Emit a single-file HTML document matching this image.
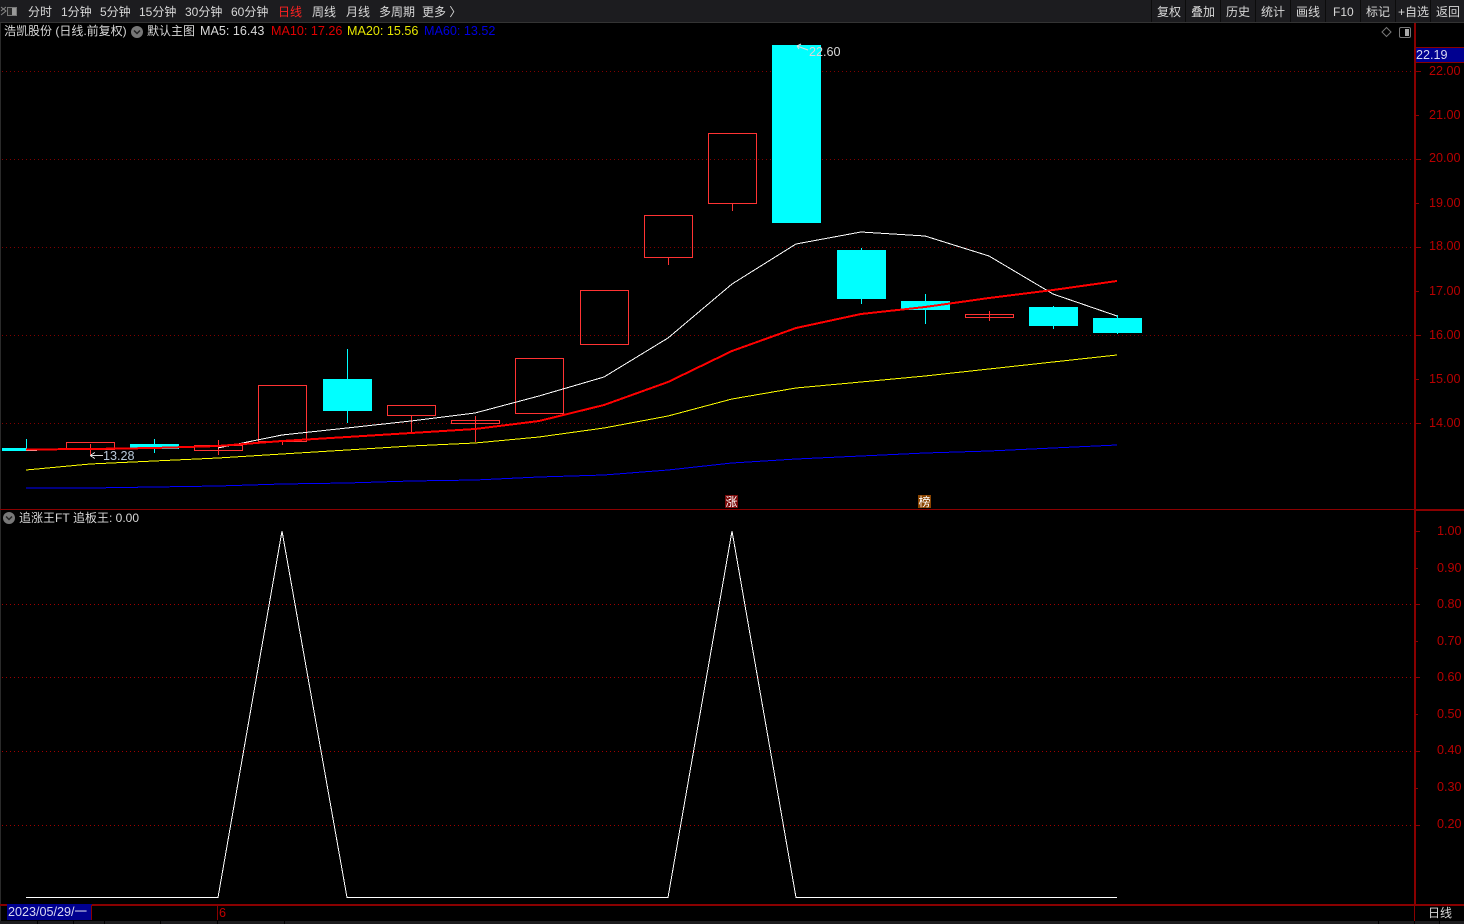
<!DOCTYPE html>
<html><head><meta charset="utf-8">
<style>
html,body{margin:0;padding:0;background:#000;width:1464px;height:924px;overflow:hidden}
body{position:relative;font-family:"Liberation Sans","Noto Sans CJK SC",sans-serif;font-size:12.6px;color:#d8d8d8}
.t{position:absolute;white-space:nowrap;line-height:16px;height:16px}
.c{font-size:12px}
.top{position:absolute;left:0;top:0;width:1464px;height:22px;background:#1c1c1f;border-bottom:1px solid #333}
.sep{position:absolute;top:0;width:1px;height:22px;background:#0c0c0c}
.ax{position:absolute;left:1429px;color:#b80000;line-height:14px;white-space:nowrap;font-size:12.6px}
svg{position:absolute;left:0;top:0}
</style></head><body>
<svg width="1464" height="924" viewBox="0 0 1464 924">
<g stroke="#800000" stroke-width="1" stroke-dasharray="1 3" shape-rendering="crispEdges">
<path d="M2 71.5H1412M2 159.5H1412M2 247.5H1412M2 335.5H1412M2 423.5H1412"/>
</g>
<g stroke="#a00000" stroke-width="1" stroke-dasharray="1 3" shape-rendering="crispEdges">
<path d="M2 604.5H1412M2 677.5H1412M2 751.5H1412M2 825.5H1412"/>
</g>
<!-- wicks & candles -->
<g shape-rendering="crispEdges">
<g stroke="#0ff" fill="none">
<path d="M26.5 439V450M154.5 439V453M347.5 349V379M347.5 411V423M861.5 248V304M925.5 294V324M1053.5 306V329M1117.5 315V334"/>
</g>
<g fill="#0ff">
<rect x="2" y="448" width="24" height="3"/>
<rect x="130" y="444" width="49" height="5"/>
<rect x="323" y="379" width="49" height="32"/>
<rect x="772" y="45" width="49" height="178"/>
<rect x="837" y="250" width="49" height="49"/>
<rect x="901" y="301" width="49" height="9"/>
<rect x="1029" y="307" width="49" height="19"/>
<rect x="1093" y="318" width="49" height="15"/>
</g>
<g stroke="#f33" fill="none">
<path d="M90.5 444V455M218.5 440V455M411.5 415V432M475.5 416V442M668.5 257V265M732.5 203V211M989.5 311V321M282.5 441V445"/>
<rect x="66.5" y="442.5" width="48" height="7"/>
<rect x="194.5" y="445.5" width="48" height="5"/>
<rect x="258.5" y="385.5" width="48" height="56"/>
<rect x="387.5" y="405.5" width="48" height="10"/>
<rect x="451.5" y="420.5" width="48" height="3"/>
<rect x="515.5" y="358.5" width="48" height="55"/>
<rect x="580.5" y="290.5" width="48" height="54"/>
<rect x="644.5" y="215.5" width="48" height="42"/>
<rect x="708.5" y="133.5" width="48" height="70"/>
<rect x="965.5" y="314.5" width="48" height="3"/>
</g>
</g>
<!-- MAs -->
<g fill="none" shape-rendering="crispEdges">
<polyline stroke="#00f" stroke-width="1" points="26,488 90,488 154,487 218,486 282,484 347,483 411,481 475,480 539,477 604,475 668,470 732,463 796,459 861,456 925,453 989,451 1053,448 1117,445"/>
<polyline stroke="#ff0" stroke-width="1" points="26,470 90,464 154,461 218,458 282,454 347,450 411,446 475,443 539,437 604,428 668,416 732,399 796,388 861,382 925,376 989,369 1053,362 1117,355"/>
<polyline stroke="#fff" stroke-width="1" points="26,450.5 37,450.5"/>
<polyline stroke="#fff" stroke-width="1" points="218,448 282,435 347,428 411,421 475,413 539,396 604,377 668,338 732,284 796,244 861,232 925,236 989,256 1053,294 1117,316"/>
<polyline stroke="#f00" stroke-width="2" points="26,449.5 90,449 154,448 218,446 282,441 347,437 411,433 475,429 539,421 604,405 668,382 732,351 796,328 861,314 925,307 989,298 1053,290 1117,281"/>
<polyline stroke="#fff" stroke-width="1" points="26,897.5 218,897.5 282,531 347,897.5 668,897.5 732,531 796,897.5 1117,897.5"/>
</g>
<!-- arrows -->
<g stroke="#ddd" fill="none" stroke-width="1">
<path d="M90 455.5H103M90 455.5L95 452.5M90 455.5L95 458.5" shape-rendering="crispEdges"/>
<path d="M797 46L808 50M797 46L801 44M797 46L799 49"/>
</g>
<!-- frame -->
<g shape-rendering="crispEdges">
<rect x="0" y="23" width="1" height="898" fill="#2a2a2a"/>
<rect x="0" y="509" width="1464" height="1" fill="#8a0000"/>
<rect x="1414" y="23" width="2" height="882" fill="#8a0000"/>
<rect x="1414" y="906" width="1" height="15" fill="#8a0000"/>
<rect x="1415" y="509" width="49" height="2" fill="#8a0000"/>
<rect x="0" y="904" width="1464" height="2" fill="#8a0000"/>
<rect x="217" y="906" width="1" height="14" fill="#8a0000"/>
<g stroke="#8a0000"><path d="M1416 71.5H1421M1416 115.5H1419M1416 159.5H1421M1416 203.5H1419M1416 247.5H1421M1416 291.5H1419M1416 335.5H1421M1416 379.5H1419M1416 423.5H1421M1416 531.5H1420M1416 568.5H1418M1416 604.5H1420M1416 641.5H1418M1416 677.5H1420M1416 714.5H1418M1416 751.5H1420M1416 788.5H1418M1416 825.5H1420"/></g>
<rect x="1416" y="47" width="48" height="16" fill="#000090"/>
<path d="M1416 47.5H1464M1416 62.5H1464" stroke="#8a0000"/>
<rect x="7" y="904" width="85" height="16" fill="#000090"/>
<rect x="91" y="905" width="1" height="15" fill="#8a0000"/>
<!-- bottom strip -->
<rect x="0" y="921" width="1464" height="3" fill="#1c1c1e"/>
<g fill="#000"><rect x="37" y="921" width="1" height="3"/><rect x="73" y="921" width="1" height="3"/><rect x="104" y="921" width="1" height="3"/><rect x="160" y="921" width="1" height="3"/><rect x="217" y="921" width="1" height="3"/><rect x="284" y="921" width="1" height="3"/><rect x="1378" y="921" width="1" height="3"/><rect x="1414" y="921" width="1" height="3"/><rect x="1439" y="921" width="1" height="3"/></g>
<!-- signals -->
<rect x="725" y="495" width="13" height="13" fill="#7a0a0a"/>
<rect x="918" y="495" width="13" height="13" fill="#8a4400"/>
</g>
<!-- icons top right -->
<path d="M1386.5 27.5L1391 32L1386.5 36.5L1382 32Z" fill="none" stroke="#777"/>
<rect x="1399.5" y="27.5" width="11" height="10" rx="1.5" fill="none" stroke="#777"/>
<rect x="1405" y="29" width="4" height="7" fill="#aaa"/>
<circle cx="137" cy="32" r="6" fill="#777"/><path d="M134 30.5L137 33.5L140 30.5" fill="none" stroke="#222" stroke-width="1.5"/>
<circle cx="9" cy="518" r="6" fill="#777"/><path d="M6 516.5L9 519.5L12 516.5" fill="none" stroke="#222" stroke-width="1.5"/>
</svg>

<div class="top"></div>
<svg width="24" height="22" viewBox="0 0 24 22"><path d="M1 7L6 11L1 15M6 7L1 11" fill="none" stroke="#888" stroke-width="1"/><rect x="7.5" y="7.5" width="9" height="8" fill="#2a2a2a" stroke="#777"/><rect x="12" y="8" width="4" height="7" fill="#999"/></svg>
<div class="t c" style="left:28px;top:4px">分时</div>
<div class="t c" style="left:61px;top:4px">1分钟</div>
<div class="t c" style="left:100px;top:4px">5分钟</div>
<div class="t c" style="left:139px;top:4px">15分钟</div>
<div class="t c" style="left:185px;top:4px">30分钟</div>
<div class="t c" style="left:231px;top:4px">60分钟</div>
<div class="t c" style="left:278px;top:4px;color:#f22">日线</div>
<div class="t c" style="left:312px;top:4px">周线</div>
<div class="t c" style="left:346px;top:4px">月线</div>
<div class="t c" style="left:379px;top:4px">多周期</div>
<div class="t c" style="left:422px;top:4px">更多 〉</div>

<div class="sep" style="left:1151px"></div><div class="sep" style="left:1185px"></div><div class="sep" style="left:1220px"></div><div class="sep" style="left:1255px"></div><div class="sep" style="left:1290px"></div><div class="sep" style="left:1325px"></div><div class="sep" style="left:1360px"></div><div class="sep" style="left:1395px"></div><div class="sep" style="left:1430px"></div>
<div class="t c" style="left:1157px;top:4px">复权</div>
<div class="t c" style="left:1191px;top:4px">叠加</div>
<div class="t c" style="left:1226px;top:4px">历史</div>
<div class="t c" style="left:1261px;top:4px">统计</div>
<div class="t c" style="left:1296px;top:4px">画线</div>
<div class="t c" style="left:1333px;top:4px">F10</div>
<div class="t c" style="left:1366px;top:4px">标记</div>
<div class="t c" style="left:1398px;top:4px">+自选</div>
<div class="t c" style="left:1436px;top:4px">返回</div>

<div class="t c" style="left:4px;top:23px">浩凯股份 (日线.前复权)</div>
<div class="t c" style="left:147px;top:23px">默认主图</div>
<div class="t" style="left:200px;top:23px">MA5: 16.43</div>
<div class="t" style="left:271px;top:23px;color:#e00000">MA10: 17.26</div>
<div class="t" style="left:347px;top:23px;color:#e6e600">MA20: 15.56</div>
<div class="t" style="left:424px;top:23px;color:#0000e0">MA60: 13.52</div>

<div class="t c" style="left:19px;top:510px">追涨王FT</div>
<div class="t c" style="left:73px;top:510px">追板王: 0.00</div>

<div class="t" style="left:103px;top:448px;color:#b8c8d8">13.28</div>
<div class="t" style="left:809px;top:44px;color:#d8d8d8">22.60</div>
<div class="t" style="left:1416px;top:47px;color:#d8d8f0">22.19</div>

<div class="ax" style="top:64px">22.00</div><div class="ax" style="top:108px">21.00</div><div class="ax" style="top:151px">20.00</div><div class="ax" style="top:196px">19.00</div><div class="ax" style="top:239px">18.00</div><div class="ax" style="top:284px">17.00</div><div class="ax" style="top:328px">16.00</div><div class="ax" style="top:372px">15.00</div><div class="ax" style="top:416px">14.00</div>
<div class="ax" style="top:524px;left:1437px">1.00</div><div class="ax" style="top:561px;left:1437px">0.90</div><div class="ax" style="top:597px;left:1437px">0.80</div><div class="ax" style="top:634px;left:1437px">0.70</div><div class="ax" style="top:670px;left:1437px">0.60</div><div class="ax" style="top:707px;left:1437px">0.50</div><div class="ax" style="top:743px;left:1437px">0.40</div><div class="ax" style="top:780px;left:1437px">0.30</div><div class="ax" style="top:817px;left:1437px">0.20</div>

<div class="t" style="left:8px;top:904px;color:#d8d8f0">2023/05/29/一</div>
<div class="t" style="left:219px;top:905px;color:#c00000">6</div>
<div class="t c" style="left:1428px;top:905px">日线</div>
<div class="t" style="left:725px;top:494px;width:13px;text-align:center;color:#fff;font-size:12px">涨</div>
<div class="t" style="left:918px;top:494px;width:13px;text-align:center;color:#fff;font-size:12px">榜</div>
</body></html>
